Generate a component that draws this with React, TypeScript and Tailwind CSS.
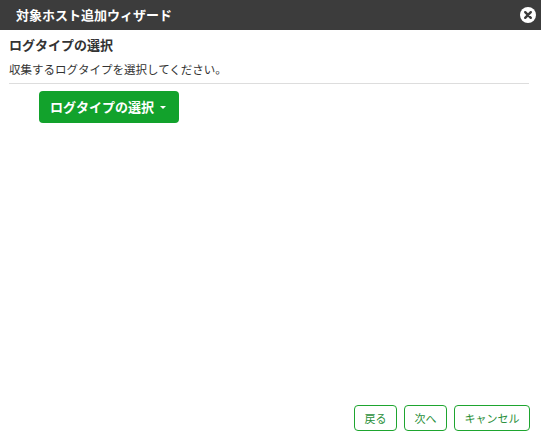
const font = { fontFamily: '"Noto Sans CJK JP", "Noto Sans", sans-serif' };

function CloseIcon() {
  return (
    <svg viewBox="0 0 16 16" className="h-4 w-4">
      <circle cx="8" cy="8" r="8" fill="#ffffff" />
      <path d="M5.2 5.2 10.8 10.8 M10.8 5.2 5.2 10.8" stroke="#3b3b3b" strokeWidth="2.4" strokeLinecap="round" />
    </svg>
  );
}

export default function App() {
  return (
    <div className="flex h-screen flex-col bg-white" style={font}>
      {/* ヘッダー */}
      <div className="flex h-[30px] shrink-0 items-center justify-between bg-[#3c3c3c] pl-4 pr-[5px]">
        <span className="text-[13px] font-bold text-white">対象ホスト追加ウィザード</span>
        <CloseIcon />
      </div>

      <div className="flex flex-1 flex-col pl-[9px] pr-3">
        <h2 className="mt-[6px] text-[13px] font-bold leading-[18px] text-[#333]">ログタイプの選択</h2>
        <p className="mt-[7px] text-[11.5px] leading-[16px] text-[#333]">収集するログタイプを選択してください。</p>
        <div className="mt-[6px] h-px bg-[#dddddd]" />

        <div className="mt-[7px] pl-[30px]">
          <button className="flex h-8 items-center gap-[6px] rounded-[4px] bg-[#12a22c] pl-[11px] pr-[13px] text-[13px] font-bold text-white">
            ログタイプの選択
            <span className="mt-px h-0 w-0 border-x-[3px] border-t-[3px] border-x-transparent border-t-white" />
          </button>
        </div>

        <div className="mt-auto mb-[6px] -mr-px flex justify-end gap-[7px]">
          <button className="h-[26px] w-[43px] rounded-[4px] border border-[#1ea52f] text-[11px] text-[#2a8f3a]">戻る</button>
          <button className="h-[26px] w-[43px] rounded-[4px] border border-[#1ea52f] text-[11px] text-[#2a8f3a]">次へ</button>
          <button className="h-[26px] w-[76px] rounded-[4px] border border-[#1ea52f] text-[11px] text-[#2a8f3a]">キャンセル</button>
        </div>
      </div>
    </div>
  );
}
